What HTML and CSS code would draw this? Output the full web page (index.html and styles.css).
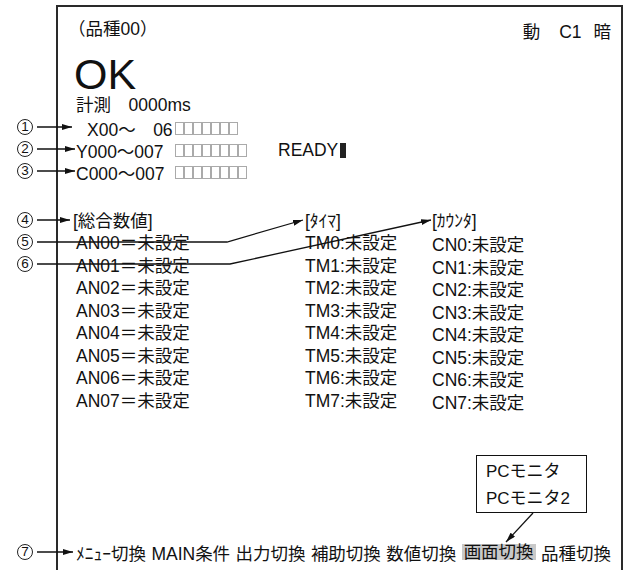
FILE: index.html
```html
<!DOCTYPE html>
<html lang="ja">

<head>
    <meta charset="UTF-8">
    <title>PCモニタ画面</title>
    <link rel="stylesheet" href="styles.css">
</head>

<body>

    <div class="page">

        <!-- 引出し番号 -->
        <div class="callouts">
            <span class="num">1</span>
            <span class="num">2</span>
            <span class="num">3</span>
            <span class="num n4">4</span>
            <span class="num">5</span>
            <span class="num">6</span>
            <span class="num n7">7</span>
        </div>

        <div class="screen">

            <div class="head">
                <span class="kind">（品種00）</span>
                <span class="status">
                    <span>動</span>
                    <span class="ch">C1</span>
                    <span>暗</span>
                </span>
            </div>

            <div class="result">OK</div>
            <div class="time">計測　0000ms</div>

            <div class="io">
                <div class="io-row">
                    <span class="io-name x">X00～　06</span>
                    <span class="bits"><i></i><i></i><i></i><i></i><i></i><i></i><i></i></span>
                </div>
                <div class="io-row">
                    <span class="io-name">Y000～007</span>
                    <span class="bits"><i></i><i></i><i></i><i></i><i></i><i></i><i></i><i></i></span>
                    <span class="ready">READY</span>
                </div>
                <div class="io-row">
                    <span class="io-name">C000～007</span>
                    <span class="bits"><i></i><i></i><i></i><i></i><i></i><i></i><i></i><i></i></span>
                </div>
            </div>

            <div class="values">
                <div class="col-head first">[総合数値]</div>
                <div class="col-head">[ﾀｲﾏ]</div>
                <div class="col-head">[ｶｳﾝﾀ]</div>

                <div>AN00＝未設定</div><div>TM0:未設定</div><div class="cn">CN0:未設定</div>
                <div>AN01＝未設定</div><div>TM1:未設定</div><div class="cn">CN1:未設定</div>
                <div>AN02＝未設定</div><div>TM2:未設定</div><div class="cn">CN2:未設定</div>
                <div>AN03＝未設定</div><div>TM3:未設定</div><div class="cn">CN3:未設定</div>
                <div>AN04＝未設定</div><div>TM4:未設定</div><div class="cn">CN4:未設定</div>
                <div>AN05＝未設定</div><div>TM5:未設定</div><div class="cn">CN5:未設定</div>
                <div>AN06＝未設定</div><div>TM6:未設定</div><div class="cn">CN6:未設定</div>
                <div>AN07＝未設定</div><div>TM7:未設定</div><div class="cn">CN7:未設定</div>
            </div>

            <div class="popup">
                <div>PCモニタ</div>
                <div>PCモニタ2</div>
            </div>

            <div class="menu">
                <span>ﾒﾆｭｰ切換</span>
                <span>MAIN条件</span>
                <span>出力切換</span>
                <span>補助切換</span>
                <span>数値切換</span>
                <span class="on">画面切換</span>
                <span>品種切換</span>
            </div>

        </div>

        <!-- 引出し線 -->
        <svg class="leaders" width="624" height="570" viewBox="0 0 624 570">
            <defs>
                <marker id="head" markerUnits="userSpaceOnUse" markerWidth="10" markerHeight="6"
                    refX="10" refY="3" orient="auto">
                    <path d="M0,0 L10,3 L0,6 z" fill="#111" />
                </marker>
            </defs>
            <g fill="none" stroke="#111" stroke-width="1.3" marker-end="url(#head)">
                <path d="M37,127 H72" />
                <path d="M37,149 H75" />
                <path d="M37,171 H75" />
                <path d="M37,220 H70" />
                <path d="M37,242 H227 L303,220" />
                <path d="M37,264 H230 L431,220" />
                <path d="M37,552 H73" />
                <path d="M533,513 L506,542" />
            </g>
        </svg>

    </div>

</body>

</html>
```

FILE: styles.css
```css
* {
    box-sizing: border-box;
}

body {
    margin: 0;
    background: #fff;
    color: #111;
    font-family: "Liberation Sans", "Noto Sans CJK JP", sans-serif;
    font-size: 17.5px;
}

.page {
    position: relative;
    display: flex;
    width: 624px;
    height: 570px;
    overflow: hidden;
}

/* left gutter with the circled numbers */
.callouts {
    width: 56px;
    flex: none;
    display: flex;
    flex-direction: column;
    padding: 116px 0 7px 17px;
}

.num {
    display: flex;
    align-items: center;
    justify-content: center;
    width: 16px;
    height: 16px;
    margin: 3px 0;
    border: 1.2px solid #222;
    border-radius: 50%;
    font-size: 13.5px;
    line-height: 1;
}

.n4 {
    margin-top: 30px;
}

.n7 {
    margin-top: auto;
}

/* the monitor screen */
.screen {
    flex: 1;
    margin: 5px 1px 0 0;
    border: 2px solid #2a2a2a;
    border-bottom: 0;
    padding: 11px 10px 7px 18px;
    display: flex;
    flex-direction: column;
}

.head {
    display: flex;
    justify-content: space-between;
    align-items: flex-start;
    line-height: 22px;
}

.kind {
    margin-left: -8px;
}

.status {
    display: flex;
    padding-top: 3px;
}

.status .ch {
    margin: 0 12px 0 19px;
}

.result {
    margin: 9px 0 0 -2px;
    font-size: 43px;
    line-height: 44px;
}

.time {
    line-height: 18px;
}

.io {
    margin-top: 3px;
}

.io-row {
    display: flex;
    align-items: center;
    height: 22px;
    white-space: nowrap;
}

.io-name {
    width: 99px;
    flex: none;
}

.io-name.x {
    padding-left: 11px;
}

.bits {
    display: flex;
}

.bits i {
    width: 9px;
    height: 13px;
    border: 1px solid #aaa;
}

.ready {
    margin-left: 31px;
}

.ready::after {
    content: "";
    display: inline-block;
    width: 6px;
    height: 15px;
    margin-left: 2px;
    vertical-align: -2px;
    background: #222;
}

.values {
    display: grid;
    grid-template-columns: 229px 127px 1fr;
    grid-template-rows: 21px;
    grid-auto-rows: 22.5px;
    margin-top: 28px;
    line-height: 22.5px;
    white-space: nowrap;
}

.values .col-head {
    line-height: 21px;
}

.values .first {
    margin-left: -3px;
}

.values .cn {
    padding-top: 2px;
}

.popup {
    margin: auto 0 28px 400px;
    width: 111px;
    border: 1px solid #111;
    padding: 2px 0 0 9px;
    line-height: 27px;
    font-size: 17px;
}

.menu {
    display: flex;
    justify-content: space-between;
    align-items: center;
    height: 22px;
    white-space: nowrap;
}

.menu .on {
    background: #c9c9c9;
    line-height: 16px;
    padding: 0 2px;
}

.leaders {
    position: absolute;
    left: 0;
    top: 0;
    pointer-events: none;
}
```
